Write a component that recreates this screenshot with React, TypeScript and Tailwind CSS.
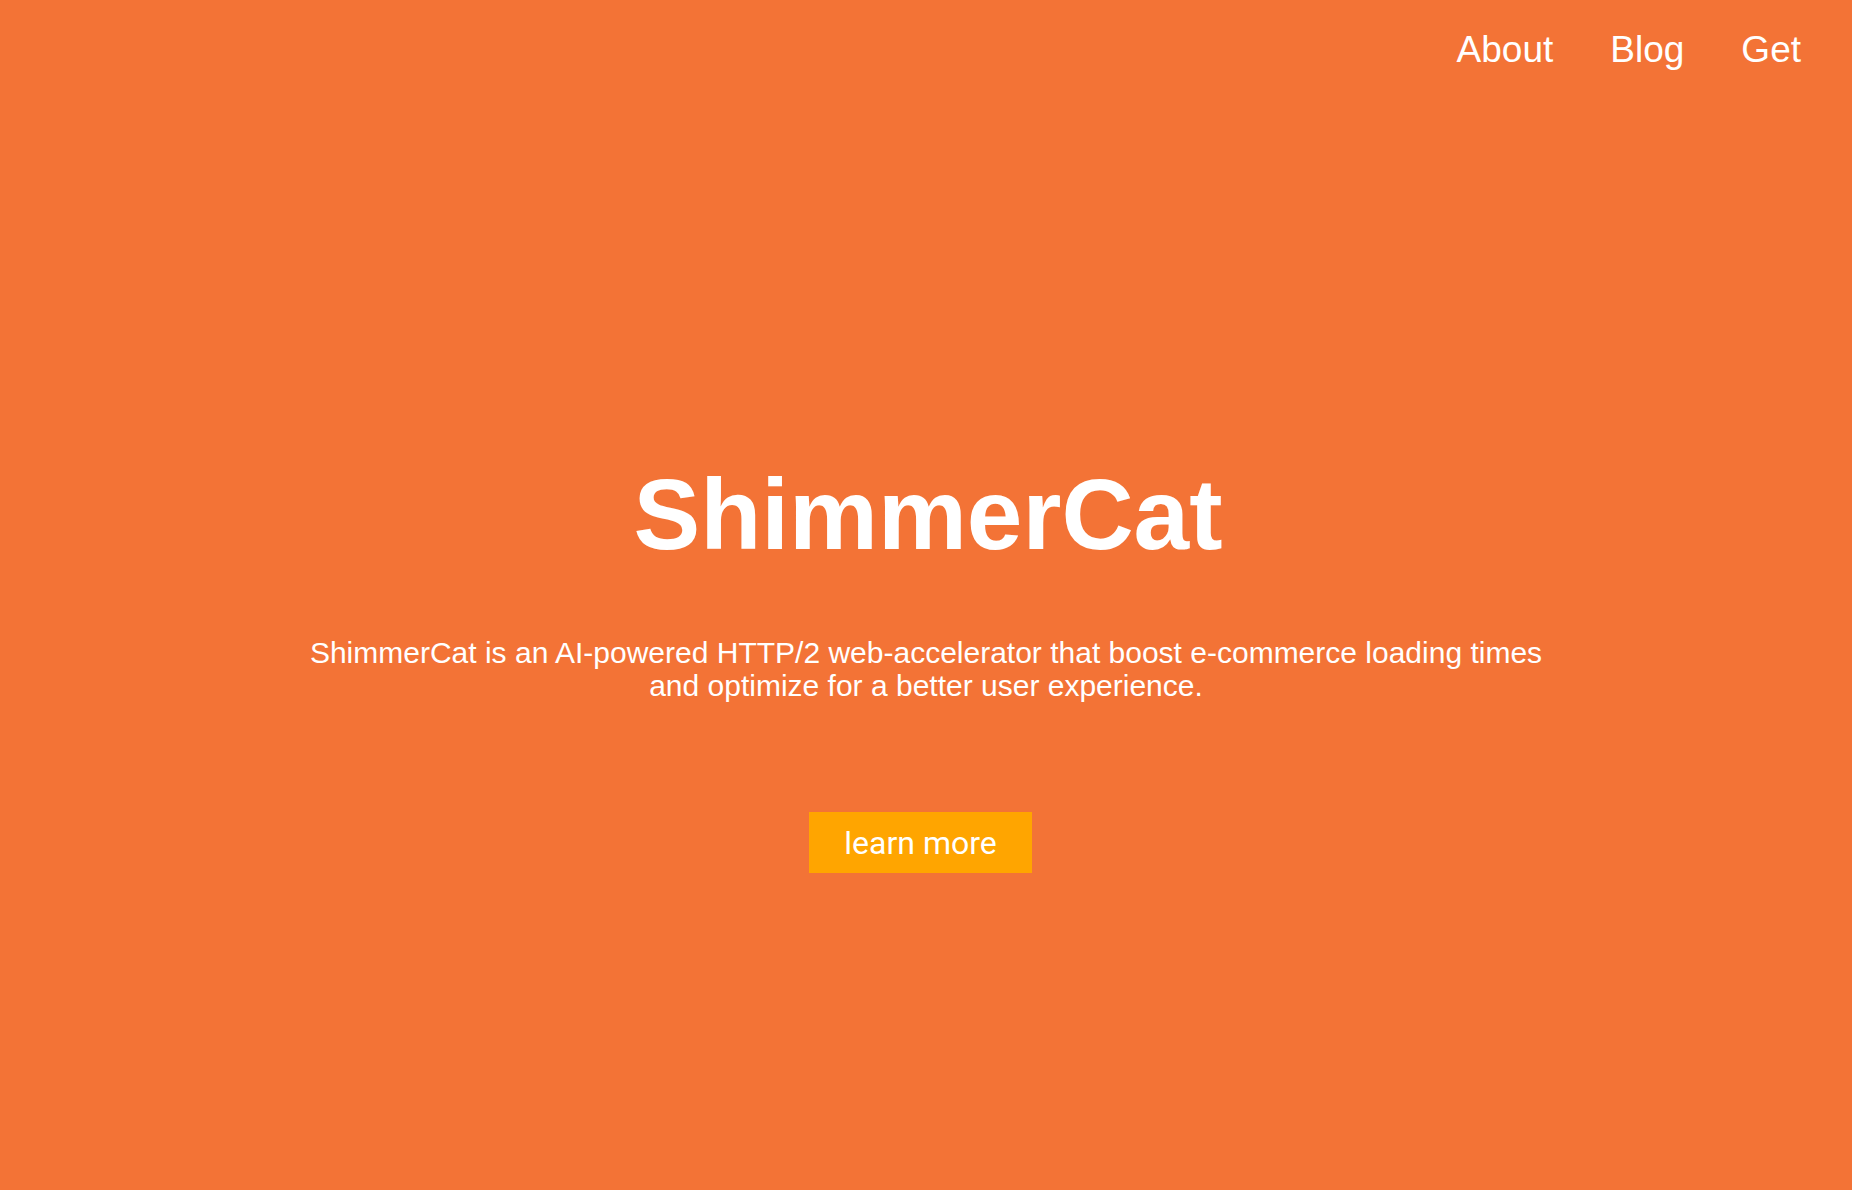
export default function App() {
  const links = ["About", "Blog", "Get"];

  return (
    <div className="min-h-screen w-full bg-[#f37336] text-white font-['Liberation_Sans',Arial,sans-serif]">
      {/* top nav */}
      <nav className="flex justify-end gap-[57px] pr-[51px] pt-[29px] text-[37px] leading-[42px]">
        {links.map((l) => (
          <a key={l} href="#" className="text-white">
            {l}
          </a>
        ))}
      </nav>

      {/* hero */}
      <main className="flex flex-col items-center">
        <h1 className="mt-[386px] ml-[4px] text-[100px] leading-[115px] font-bold">ShimmerCat</h1>
        <p className="mt-[64px] text-center text-[30px] leading-[33px]">
          ShimmerCat is an AI-powered HTTP/2 web-accelerator that boost e-commerce loading times
          <br />
          and optimize for a better user experience.
        </p>
        <button className="mt-[110px] mr-[11px] flex h-[61px] w-[223px] items-center justify-center bg-[#ffa500] font-['Roboto',sans-serif] text-[32px] leading-[38px] text-white">
          learn more
        </button>
      </main>
    </div>
  );
}
